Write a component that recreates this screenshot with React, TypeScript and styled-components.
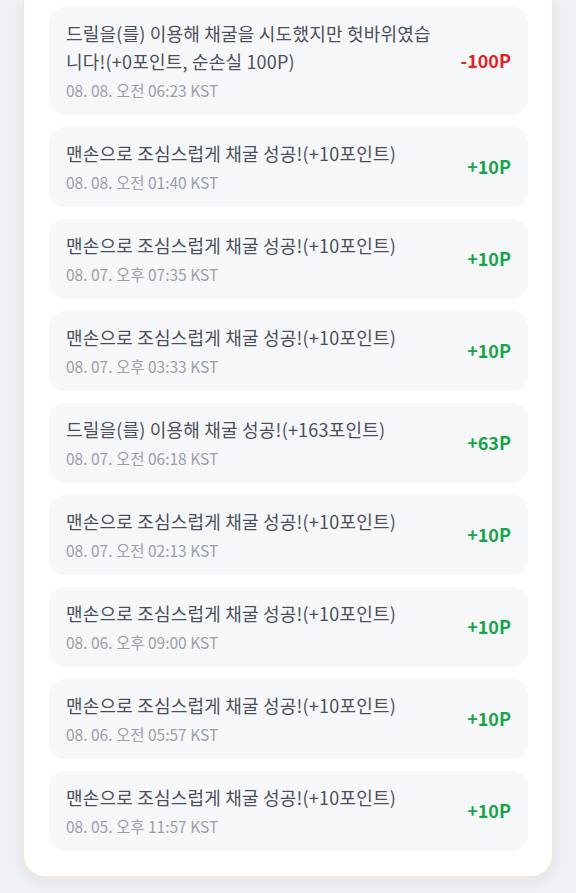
import React from "react";
import styled, { createGlobalStyle } from "styled-components";

const Global = createGlobalStyle`
  html, body { margin: 0; padding: 0; background: #eef0f3; }
  body { font-family: "Noto Sans CJK KR", "Noto Sans", sans-serif; -webkit-font-smoothing: antialiased; }
`;

const Page = styled.div`
  padding: 0 23px 15px 23px;
`;

const Card = styled.div`
  background: #ffffff;
  border: 1px solid #fbe6c6;
  border-top: none;
  border-radius: 0 0 22px 22px;
  box-shadow: 0 4px 14px rgba(30, 40, 60, 0.06);
  padding: 7px 24px 25px 25px;
  display: flex;
  flex-direction: column;
  gap: 12px;
`;

const Item = styled.div`
  background: #f6f7f9;
  border-radius: 16px;
  padding: 12px 17px 15px 17px;
  display: flex;
  align-items: center;
  gap: 16px;
`;

const Body = styled.div`
  flex: 1;
  min-width: 0;
  display: flex;
  flex-direction: column;
  gap: 5px;
`;

const Title = styled.div`
  font-size: 18px;
  letter-spacing: 0.2px;
  line-height: 28px;
  color: #4a4f5b;
`;

const Time = styled.div`
  font-size: 15.5px;
  line-height: 20px;
  color: #9aa0ab;
`;

const Points = styled.div<{ $neg?: boolean }>`
  flex: none;
  font-size: 18px;
  font-weight: 700;
  color: ${(p) => (p.$neg ? "#dc2626" : "#16a34a")};
`;

const rows = [
  { t: "드릴을(를) 이용해 채굴을 시도했지만 헛바위였습니다!(+0포인트, 순손실 100P)", d: "08. 08. 오전 06:23 KST", p: "-100P", neg: true },
  { t: "맨손으로 조심스럽게 채굴 성공!(+10포인트)", d: "08. 08. 오전 01:40 KST", p: "+10P" },
  { t: "맨손으로 조심스럽게 채굴 성공!(+10포인트)", d: "08. 07. 오후 07:35 KST", p: "+10P" },
  { t: "맨손으로 조심스럽게 채굴 성공!(+10포인트)", d: "08. 07. 오후 03:33 KST", p: "+10P" },
  { t: "드릴을(를) 이용해 채굴 성공!(+163포인트)", d: "08. 07. 오전 06:18 KST", p: "+63P" },
  { t: "맨손으로 조심스럽게 채굴 성공!(+10포인트)", d: "08. 07. 오전 02:13 KST", p: "+10P" },
  { t: "맨손으로 조심스럽게 채굴 성공!(+10포인트)", d: "08. 06. 오후 09:00 KST", p: "+10P" },
  { t: "맨손으로 조심스럽게 채굴 성공!(+10포인트)", d: "08. 06. 오전 05:57 KST", p: "+10P" },
  { t: "맨손으로 조심스럽게 채굴 성공!(+10포인트)", d: "08. 05. 오후 11:57 KST", p: "+10P" },
];

export default function App() {
  return (
    <>
      <Global />
      <Page>
        <Card>
          {rows.map((r, i) => (
            <Item key={i}>
              <Body>
                <Title>{r.t}</Title>
                <Time>{r.d}</Time>
              </Body>
              <Points $neg={r.neg}>{r.p}</Points>
            </Item>
          ))}
        </Card>
      </Page>
    </>
  );
}
